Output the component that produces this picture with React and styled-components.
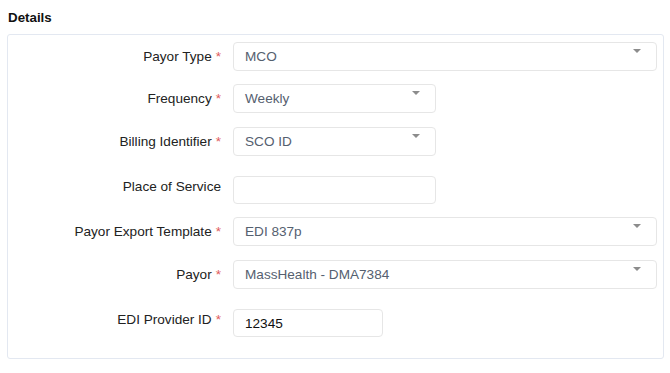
import React from "react";
import styled, { createGlobalStyle } from "styled-components";

const GlobalStyle = createGlobalStyle`
  html, body { margin: 0; padding: 0; background: #ffffff; }
  body { font-family: "Liberation Sans", Arial, sans-serif; }
  * { box-sizing: border-box; }
`;

const Page = styled.div`
  width: 670px;
  height: 373px;
  padding: 9px 6px 0 7px;
  background: #ffffff;
`;

const Title = styled.h2`
  margin: 0 0 8px 1px;
  font-size: 13.33px;
  line-height: 17px;
  font-weight: 700;
  color: #111111;
`;

const Card = styled.section`
  width: 657px;
  border: 1px solid #e3e8f1;
  border-radius: 3px;
  padding: 7px 0 21px 0;
  display: flex;
  flex-direction: column;
`;

const Row = styled.div`
  display: grid;
  grid-template-columns: 213px 1fr;
  column-gap: 12px;
  align-items: start;
  margin-top: ${(p) => p.$top || 0}px;
`;

const Label = styled.label`
  text-align: right;
  font-size: 13.6px;
  line-height: 16px;
  color: #222222;
  padding-top: ${(p) => (p.$input ? 3 : 7)}px;
  white-space: nowrap;
`;

const Required = styled.span`
  color: #e05a5a;
  margin-left: 4px;
`;

const Box = styled.div`
  position: relative;
  width: ${(p) => p.$w}px;
  height: ${(p) => (p.$input ? 28 : 29)}px;
  border: 1px solid #e6e6e6;
  border-radius: 4px;
  background: #ffffff;
  padding: 6px 0 0 11px;
  font-size: 13.6px;
  line-height: 16px;
  color: ${(p) => (p.$input ? "#111111" : "#55606f")};
`;

const Caret = styled.span`
  position: absolute;
  top: 6px;
  right: 15px;
  width: 0;
  height: 0;
  border-left: 4px solid transparent;
  border-right: 4px solid transparent;
  border-top: 4px solid #8c8c8c;
`;

const rows = [
  { label: "Payor Type", req: true, value: "MCO", w: 424, select: true, top: 0 },
  { label: "Frequency", req: true, value: "Weekly", w: 203, select: true, top: 13 },
  { label: "Billing Identifier", req: true, value: "SCO ID", w: 203, select: true, top: 14 },
  { label: "Place of Service", req: false, value: "", w: 203, select: false, top: 20 },
  { label: "Payor Export Template", req: true, value: "EDI 837p", w: 424, select: true, top: 13 },
  { label: "Payor", req: true, value: "MassHealth - DMA7384", w: 424, select: true, top: 14 },
  { label: "EDI Provider ID", req: true, value: "12345", w: 150, select: false, top: 20 },
];

export default function App() {
  return (
    <>
      <GlobalStyle />
      <Page>
        <Title>Details</Title>
        <Card>
          {rows.map((r) => (
            <Row key={r.label} $top={r.top}>
              <Label $input={!r.select}>
                {r.label}
                {r.req && <Required>*</Required>}
              </Label>
              <Box $w={r.w} $input={!r.select}>
                {r.value}
                {r.select && <Caret />}
              </Box>
            </Row>
          ))}
        </Card>
      </Page>
    </>
  );
}
